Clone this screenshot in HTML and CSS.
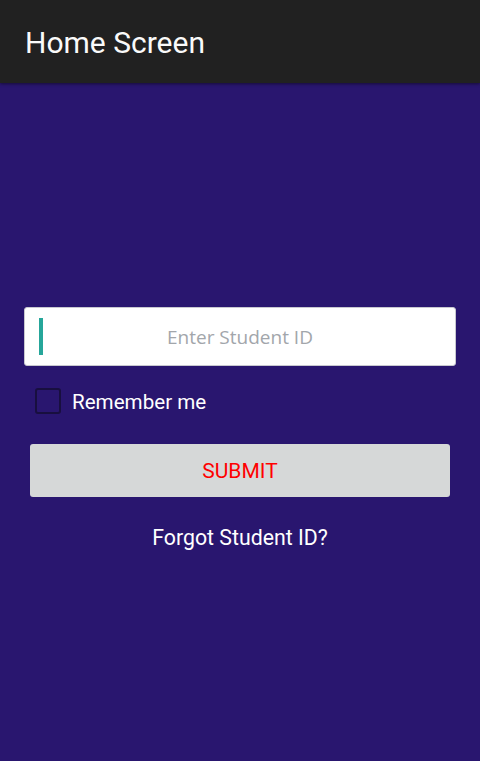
FILE: index.html
```html
<!DOCTYPE html>
<html lang="en">
<head>
    <meta charset="UTF-8">
    <meta name="viewport" content="width=device-width, initial-scale=1.0">
    <title>Home Screen</title>
    <link rel="stylesheet" href="styles.css">
</head>
<body>
    <header class="action-bar">
        <h1>Home Screen</h1>
    </header>

    <main class="login">
        <div class="id-field">
            <span class="cursor"></span>
            <span class="placeholder">Enter Student ID</span>
        </div>

        <label class="remember">
            <span class="check-box"></span>
            <span>Remember me</span>
        </label>

        <button class="submit-btn">SUBMIT</button>

        <a class="forgot" href="#">Forgot Student ID?</a>
    </main>
</body>
</html>
```

FILE: styles.css
```css
/* General Styles */
* {
    margin: 0;
    padding: 0;
    box-sizing: border-box;
}

body {
    background-color: #29166f;
    font-family: 'Roboto', sans-serif;
    color: #fff;
    min-height: 100vh;
}

/* Action Bar */
.action-bar {
    height: 83px;
    background-color: #212121;
    display: flex;
    align-items: center;
    padding-left: 25px;
    box-shadow: 0 1px 3px rgba(0, 0, 0, 0.5);
}

.action-bar h1 {
    font-size: 30px;
    font-weight: 400;
    color: #fafafa;
    padding-top: 1px;
}

/* Login Form */
.login {
    display: flex;
    flex-direction: column;
    padding: 224px 24px 0 24px;
}

.id-field {
    position: relative;
    height: 59px;
    width: 432px;
    background-color: #fff;
    border: 1px solid #c8c8d0;
    border-radius: 3px;
    display: flex;
    align-items: center;
    justify-content: center;
}

.cursor {
    position: absolute;
    left: 14px;
    top: 10px;
    width: 4px;
    height: 37px;
    background-color: #26a69a;
}

.placeholder {
    font-family: 'Open Sans', sans-serif;
    font-size: 19px;
    color: #a2a6ab;
    padding-top: 1px;
}

.remember {
    display: flex;
    align-items: center;
    gap: 11px;
    margin-top: 22px;
    margin-left: 11px;
    font-size: 20.6px;
}

.remember span:last-child {
    padding-top: 2px;
}

.check-box {
    width: 26px;
    height: 26px;
    border: 2px solid #180f3f;
    border-radius: 3px;
}

.submit-btn {
    margin: 30px 6px 0 6px;
    height: 53px;
    border: none;
    border-radius: 3px;
    background-color: #d6d8d8;
    color: #ff0000;
    font-family: 'Roboto', sans-serif;
    font-size: 21px;
    cursor: pointer;
}

.forgot {
    margin-top: 28px;
    text-align: center;
    color: #fff;
    font-size: 21.3px;
    text-decoration: none;
}
```
